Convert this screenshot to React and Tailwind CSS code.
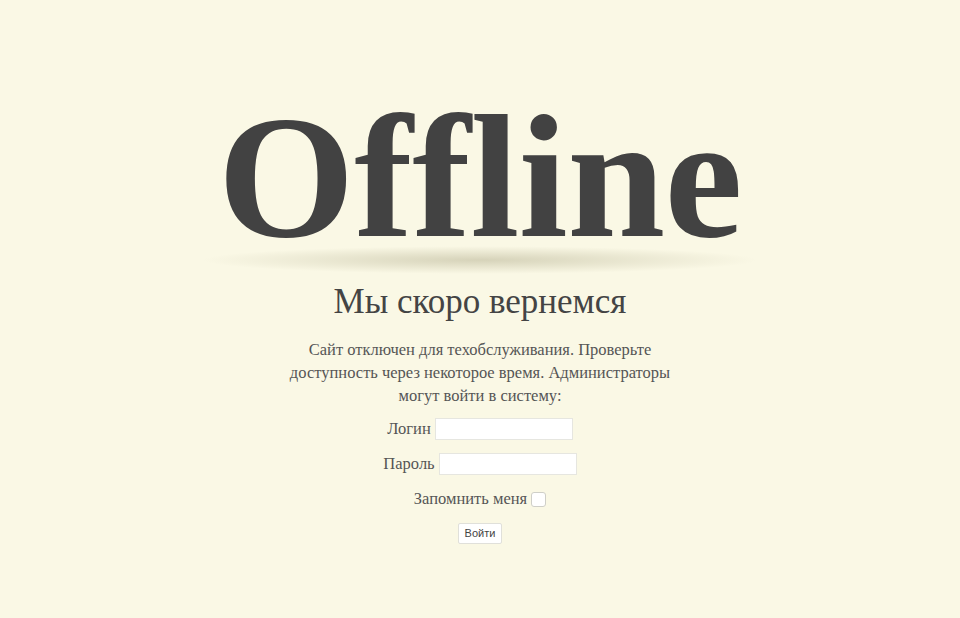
import React from 'react';

export default function App() {
  return (
    <div className="min-h-screen w-full bg-[#faf8e5] text-[#404040] flex flex-col items-center" style={{ fontFamily: '"Liberation Serif", "Times New Roman", serif' }}>
      {/* Title with soft shadow below */}
      <div className="mt-[90px] flex flex-col items-center">
        <h1 className="text-[176px] font-bold leading-[174px] tracking-[-0.5px] text-[#424242]">Offline</h1>
        <div className="-mt-[18px] h-[28px] w-[560px] bg-[radial-gradient(ellipse_at_center,rgba(160,155,120,0.4)_0%,rgba(160,155,120,0.14)_45%,rgba(250,248,229,0)_70%)]" />
      </div>

      <h2 className="mt-[8px] text-[35px] leading-[40px] text-[#444]">Мы скоро вернемся</h2>

      <p className="mt-[16px] w-[392px] text-center text-[16.5px] leading-[23px] text-[#555]">
        Сайт отключен для техобслуживания. Проверьте доступность через некоторое время. Администраторы могут войти в систему:
      </p>

      <form className="mt-[10px] flex flex-col items-center text-[16.5px] text-[#555]" onSubmit={(e) => e.preventDefault()}>
        <label className="flex items-center gap-[4px] h-[24px]">
          Логин
          <input type="text" className="h-[22px] w-[138px] bg-white border border-[#e6e6e0] outline-none" />
        </label>
        <label className="mt-[11px] flex items-center gap-[4px] h-[24px]">
          Пароль
          <input type="password" className="h-[22px] w-[138px] bg-white border border-[#e6e6e0] outline-none" />
        </label>
        <label className="mt-[11px] flex items-center gap-[4px] h-[24px]">
          Запомнить меня
          <span className="inline-block h-[15px] w-[15px] rounded-[3px] bg-white border border-[#cfcfc8]" />
        </label>
        <button type="submit" className="mt-[12px] h-[21px] px-[6px] bg-white border border-[#e0e0da] rounded-[2px] text-[11px] text-[#444]" style={{ fontFamily: '"Liberation Sans", Arial, sans-serif' }}>
          Войти
        </button>
      </form>
    </div>
  );
}
